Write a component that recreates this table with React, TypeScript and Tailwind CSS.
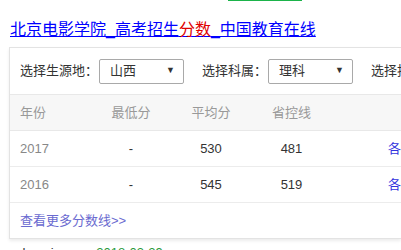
import React from "react";

const font = { fontFamily: "'Liberation Sans', 'Noto Sans CJK SC', sans-serif" } as const;

const ROWS = [
  { year: "2017", min: "-", avg: "530", line: "481" },
  { year: "2016", min: "-", avg: "545", line: "519" },
];

function Select({ value, width }: { value: string; width: string }) {
  return (
    <div className={`flex shrink-0 items-center justify-between h-[25px] ${width} border border-[#a9a9a9] rounded-[2px] bg-white pl-[10px] pr-[8px]`}>
      <span className="text-[13px] text-[#333]">{value}</span>
      <span className="text-[9px] text-[#333]">▼</span>
    </div>
  );
}

export default function App() {
  return (
    <div className="w-[401px] h-[250px] overflow-hidden bg-white" style={font}>
      <div className="ml-[228px] w-[74px] h-px bg-[#1bb34a]" />

      {/* 标题 */}
      <div className="mt-[17px] pl-[10px] text-[16px] leading-[24px] whitespace-nowrap">
        <a href="#" className="text-[#0000ff] underline">
          北京电影学院_高考招生<span className="text-[#e00000]">分数</span>_中国教育在线
        </a>
      </div>

      {/* 分数线面板 */}
      <div className="mt-[5px] ml-[9px] border-l border-t border-b border-[#e3e3e3] shadow-[0_2px_3px_rgba(0,0,0,0.08)] text-[13px]">
        <div className="flex items-center h-[46px] pl-[10px] whitespace-nowrap text-[#333]">
          <span className="shrink-0 w-[79px]">选择生源地：</span>
          <Select value="山西" width="w-[85px]" />
          <span className="shrink-0 ml-[18px] w-[66px]">选择科属：</span>
          <Select value="理科" width="w-[85px]" />
          <span className="shrink-0 ml-[18px]">选择批次：</span>
        </div>

        <div className="grid grid-cols-[81px_80px_80px_81px_1fr] items-center h-[37px] bg-[#f7f7f7] border-t border-b border-[#e8e8e8] text-[#999]">
          <span className="pl-[10px]">年份</span>
          <span className="text-center">最低分</span>
          <span className="text-center">平均分</span>
          <span className="text-center">省控线</span>
          <span />
        </div>

        {ROWS.map((r) => (
          <div key={r.year} className="grid grid-cols-[81px_80px_80px_81px_1fr] items-center h-[36px] border-b border-[#ececec] text-[#333] whitespace-nowrap">
            <span className="pl-[10px] text-[#888]">{r.year}</span>
            <span className="text-center">{r.min}</span>
            <span className="text-center">{r.avg}</span>
            <span className="text-center">{r.line}</span>
            <span className="pl-[56px] text-[#3333dd]">各批次</span>
          </div>
        ))}

        <div className="flex items-center h-[35px] pl-[10px]">
          <a href="#" className="text-[#6a6ad0]">查看更多分数线&gt;&gt;</a>
        </div>
      </div>

      <div className="mt-[6px] pl-[16px] text-[13px] leading-[16px] whitespace-nowrap">
        <span className="text-[#333]">shanxi.sogou </span>
        <span className="text-[#2a9a3a]">2018-03-29</span>
      </div>
    </div>
  );
}
